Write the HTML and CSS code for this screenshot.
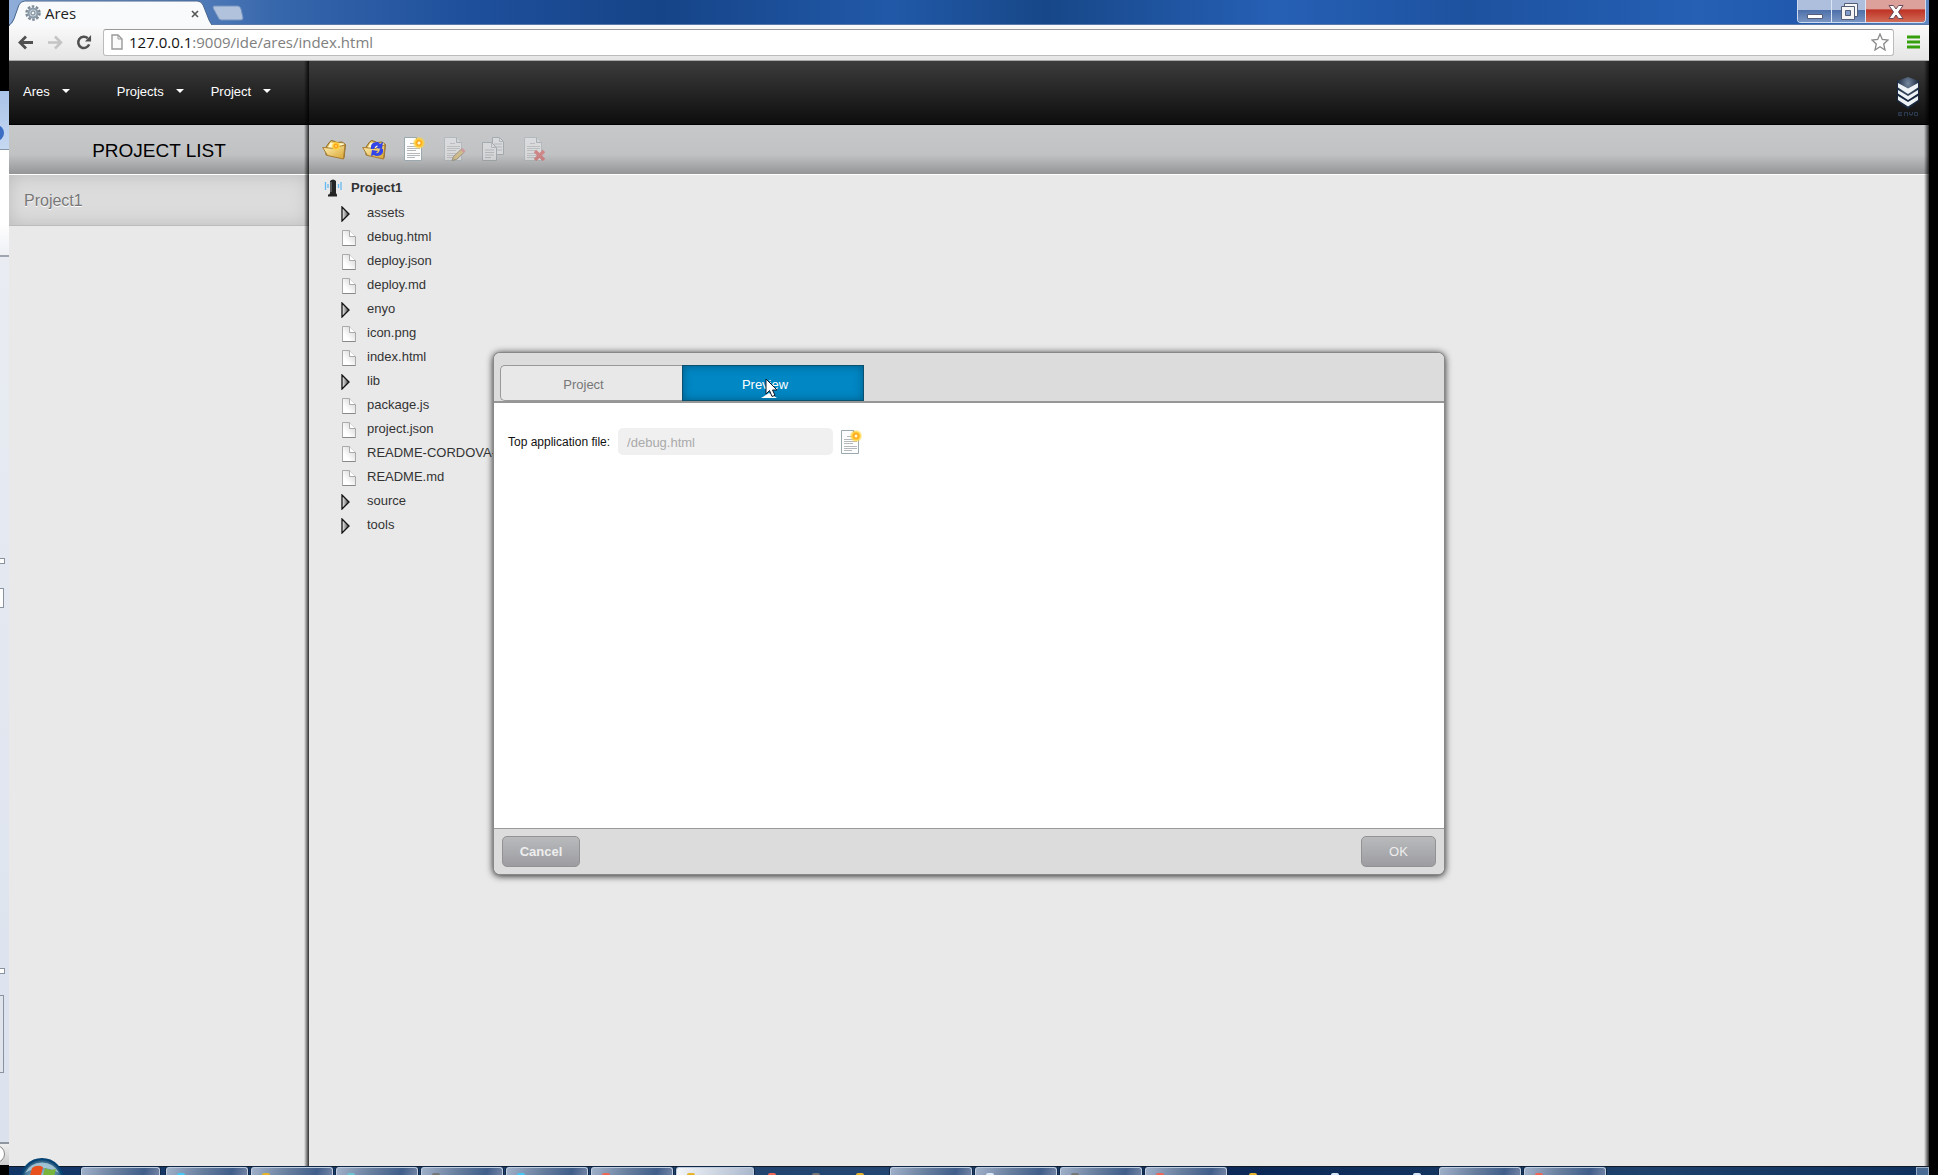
FILE: index.html
```html
<!DOCTYPE html>
<html lang="en">
<head>
<meta charset="utf-8">
<title>Ares</title>
<link rel="stylesheet" href="styles.css">
</head>
<body>
<svg class="defs" width="0" height="0" aria-hidden="true">
  <defs>
    <linearGradient id="gold" x1="0" y1="0" x2="1" y2="1"><stop offset="0" stop-color="#fff3ba"/><stop offset="1" stop-color="#d9a42e"/></linearGradient>
    <linearGradient id="paper" x1="1" y1="0" x2="0" y2="1"><stop offset="0" stop-color="#cfcfcf"/><stop offset=".7" stop-color="#fff"/></linearGradient>
    <linearGradient id="arrow" x1="0" y1="0" x2="1" y2="0"><stop offset="0" stop-color="#f4f4f4"/><stop offset="1" stop-color="#444"/></linearGradient>
    <radialGradient id="sun"><stop offset="0" stop-color="#fff6b0"/><stop offset=".3" stop-color="#ff9c10"/><stop offset=".6" stop-color="#ffd03c"/><stop offset="1" stop-color="#ffd84000"/></radialGradient>
    <radialGradient id="orb"><stop offset="0" stop-color="#b8d8e8"/><stop offset=".8" stop-color="#4a7d9c"/><stop offset="1" stop-color="#0d4068"/></radialGradient>
    <symbol id="folder" viewBox="0 0 24 24">
      <path d="M4 10 8 4.500 9.500 3.500 13 4.500 15 5.500 20 5 23.500 7.500 22 21 4 18z" fill="#dcb555" stroke="#8d6a28"/>
      <path d="M6 10 8.500 5.500 14 6 22 6.500 20.500 12 7 13z" fill="#fff8d0"/>
      <path d="M.7 10.500 14 11.500 17 9.500 23 8 21.500 22 5.500 18.500z" fill="url(#gold)" stroke="#a87c34"/>
    </symbol>
    <symbol id="doc" viewBox="0 0 24 24">
      <path d="M2.500.5h12l5 5v18h-17z" fill="#fdfdfd" stroke="#9aa8b0"/>
      <path d="M14.500.5v5h5" fill="#e5edf2" stroke="#87949c"/>
      <path d="M8 6.500h5M5 9.500h13M5 11.500h13M5 13.500h9M5 16.500h13M5 18.500h13M5 20.500h8" stroke="#b4b8bb" fill="none"/>
    </symbol>
    <symbol id="newdoc" viewBox="0 0 24 24"><use href="#doc"/><circle cx="17" cy="6" r="6.500" fill="url(#sun)"/><circle cx="17" cy="6" r="1.500" fill="#fff8cc"/></symbol>
    <symbol id="file" viewBox="0 0 14 16"><path d="M.5.500h7l6 6v9H.5z" fill="url(#paper)" stroke="#aaa"/><path d="M7.500.5v6h6" fill="#fff" stroke="#aaa"/><path d="M.5 15.500h13" stroke="#888"/></symbol>
    <symbol id="expand" viewBox="0 0 10 16"><path d="M1 1 8 8 1 15z" fill="url(#arrow)" stroke="#111" stroke-width="1.300"/></symbol>
  </defs>
</svg>
<div class="desktop">
  <aside class="behind">
    <div class="behind-glass"><i></i></div><div class="behind-white"></div>
    <div class="behind-page"><i></i><i></i><i></i><i></i></div><div class="behind-end"><i></i></div>
  </aside>
  <div class="window">
    <header class="titlebar">
      <div class="tab">
        <svg class="tab-shape" viewBox="0 0 205 26" preserveAspectRatio="none"><path d="M0 25Q3 24 5 19L10 5Q12 1 16 1H190Q194 1 196 5L202 20Q204 24 205 25V26H0z" fill="#f9fafb" stroke="#46648c"/><path d="M1 25.500H205" stroke="#f9fafb"/></svg>
        <svg class="gear" viewBox="0 0 16 16"><circle cx="8" cy="8" r="6.500" fill="none" stroke="#7d8b98" stroke-width="2.500" stroke-dasharray="2.600 1.480"/><circle cx="8" cy="8" r="4.500" fill="#c5d2dc" stroke="#8c9ba8" stroke-width="2"/><circle cx="8" cy="8" r="2" fill="#f4f7f9" stroke="#71818f"/></svg>
        <span>Ares</span>
        <button class="tab-close" aria-label="Close tab"><svg viewBox="0 0 8 8"><path d="m1 1 6 6M7 1 1 7" stroke="#555" stroke-width="1.600"/></svg></button>
      </div>
      <button class="newtab" aria-label="New tab"><svg viewBox="0 0 32 16"><path d="M2 1h24q2 0 3 3l2 9q0 2-2 2H9q-2 0-3-3L1 3q0-2 1-2" fill="#b1c2dc" stroke="#7593bf"/></svg></button>
      <div class="wincontrols">
        <button aria-label="Minimize"><svg viewBox="0 0 20 18"><path d="M2.500 11.500h15v4h-15z" fill="#fff" stroke="#535e78"/></svg></button>
        <button aria-label="Restore"><svg viewBox="0 0 20 18"><path d="M5.500.5h13v13h-13z" fill="#f7f7f7" stroke="#535e78"/><path d="M2.500 3.500h13v13h-13z" fill="#f4f4f4" stroke="#535e78"/><path d="M6.500 7.500h5v5h-5z" fill="#7f9bc9" stroke="#535e78"/></svg></button>
        <button class="close" aria-label="Close"><svg viewBox="0 0 20 18"><path d="M3 2.500h4.500L10 6l2.500-3.500H17L12.500 9l4.500 6.500h-4.500L10 12l-2.500 3.500H3L7.500 9z" fill="#fff" stroke="#6a4a58"/></svg></button>
      </div>
    </header>
    <div class="navbar">
      <button aria-label="Back"><svg viewBox="0 0 16 14"><path d="M8 1 2 7l6 6M2 7h13" fill="none" stroke="#505050" stroke-width="2.800"/></svg></button>
      <button aria-label="Forward"><svg viewBox="0 0 16 14"><path d="m8 1 6 6-6 6M14 7H1" fill="none" stroke="#c4c4c4" stroke-width="2.500"/></svg></button>
      <button aria-label="Reload"><svg viewBox="0 0 16 16"><path d="M13.500 10A6 6 0 1 1 12 3.500" fill="none" stroke="#505050" stroke-width="2.700"/><path d="M15.500 0v7H9z" fill="#505050"/></svg></button>
      <div class="address">
        <svg class="page" viewBox="0 0 12 16"><path d="M1 1h6l4 4v10H1z" fill="#fafafa" stroke="#999" stroke-width="1.400"/><path d="M7 1v4h4" fill="none" stroke="#999"/></svg>
        <span><b>127.0.0.1</b>:9009/ide/ares/index.html</span>
        <button aria-label="Bookmark"><svg viewBox="0 0 18 18"><path d="m9 1 2.300 5.500 5.700.5-4.300 4 1.300 6L9 13.700 4 17l1.300-6L1 7l5.700-.5z" fill="#fff" stroke="#8a8a8a" stroke-width="1.300"/></svg></button>
      </div>
      <button class="menu" aria-label="Menu"><svg viewBox="0 0 13 14"><path d="M0 2h13M0 7h13M0 12h13" stroke="#36a00c" stroke-width="3"/></svg></button>
    </div>
    <main class="app">
      <section class="sidebar">
        <nav class="topbar"><button>Ares</button><button>Projects</button><button>Project</button></nav>
        <h1>PROJECT LIST</h1>
        <a class="project" href="#project1">Project1</a>
      </section>
      <section class="workspace">
        <div class="topbar brand">
          <svg viewBox="0 0 24 40"><defs><radialGradient id="shield" cx=".5" cy=".2"><stop offset="0" stop-color="#75879f"/><stop offset="1" stop-color="#17273d"/></radialGradient></defs><path d="M1 4 12 0l11 4v20L12 32 1 24z" fill="url(#shield)"/><path d="m2 6 10 5.500L22 6v4.500L12 17 2 10.500zm0 7 10 6 10-6v3.500L12 23 2 16.500zm0 6 10 6 10-6v4l-10 6.500L2 23z" fill="#edf2f6"/><path d="M6 35.500H2.500v3H6M2.500 37H6M8.500 39v-3.500h3V39M13.500 35v2.500h3V35M15 37.500V39M18.500 35.500h3v3h-3z" fill="none" stroke="#2c3a50"/></svg>
        </div>
        <div class="tools">
          <button aria-label="New folder"><svg viewBox="0 0 24 24"><use href="#folder"/><circle cx="14" cy="9" r="5" fill="url(#sun)"/></svg></button>
          <button aria-label="Refresh folder"><svg viewBox="0 0 24 24"><use href="#folder"/><path d="M9 12q-1-7 6-7 2 0 3 2l3-2-1 7-6-1 2-2q-2-2-4 3zm12 0q1 7-6 7-2 0-3-1l-3 1 1-6 6 1-2 2q3 1 4-4z" fill="#3344e8"/></svg></button>
          <button aria-label="New file"><svg viewBox="0 0 24 24"><use href="#newdoc"/></svg></button>
          <button aria-label="Edit file" disabled><svg viewBox="0 0 24 24"><use href="#doc"/><path d="m10 23.500 1.500-4 8-7.500 3 3-8 7.500z" fill="#e8b43c" stroke="#6a5724"/><path d="m18.500 13 2-2 3 3-2 2z" fill="#e66060"/></svg></button>
          <button aria-label="Copy file" disabled><svg viewBox="0 0 24 24"><path d="M10.500.5h7l4 4v13h-11z" fill="#f6f8f9" stroke="#788389"/><path d="M.5 5.500h9l5 5v13H.5z" fill="#f6f8f9" stroke="#788389"/><path d="M17.500.5v4h4M9.500 5.500v5h5M12 7h8M12 10h8M15 13h5M3 13h9M3 15.500h9M3 18h9M3 20.500h6" fill="none" stroke="#9ba2a6"/></svg></button>
          <button aria-label="Delete file" disabled><svg viewBox="0 0 24 24"><use href="#doc"/><path d="m13 14 9 9M22 14l-9 9" stroke="#e22d2d" stroke-width="3.500"/></svg></button>
        </div>
        <ul class="tree">
          <li class="root"><svg viewBox="0 0 18 18"><path d="M6 2q3-3 6 0v12l1 2H5l1-2z" fill="#252525"/><path d="M7 3v10" stroke="#888"/><path d="M4 16.500h9" stroke="#222" stroke-width="2"/><path d="M1.500 3v8M4 5v4M14.500 5v4M17 3v8" stroke="#65b9ee" stroke-width="1.300"/></svg>Project1</li>
          <li class="dir"><svg><use href="#expand"/></svg>assets</li>
          <li><svg><use href="#file"/></svg>debug.html</li>
          <li><svg><use href="#file"/></svg>deploy.json</li>
          <li><svg><use href="#file"/></svg>deploy.md</li>
          <li class="dir"><svg><use href="#expand"/></svg>enyo</li>
          <li><svg><use href="#file"/></svg>icon.png</li>
          <li><svg><use href="#file"/></svg>index.html</li>
          <li class="dir"><svg><use href="#expand"/></svg>lib</li>
          <li><svg><use href="#file"/></svg>package.js</li>
          <li><svg><use href="#file"/></svg>project.json</li>
          <li><svg><use href="#file"/></svg>README-CORDOVA-</li>
          <li><svg><use href="#file"/></svg>README.md</li>
          <li class="dir"><svg><use href="#expand"/></svg>source</li>
          <li class="dir"><svg><use href="#expand"/></svg>tools</li>
        </ul>
      </section>
    </main>
  </div>
  <div class="edge"></div>
</div>
<footer class="taskbar">
  <button class="start" aria-label="Start"><svg viewBox="0 0 44 44"><circle cx="22" cy="22" r="21" fill="url(#orb)" stroke="#064475" stroke-width="2"/><path d="M5 15A19 19 0 0 1 39 15Q22 5 5 15" fill="#c1dce7" opacity=".7"/><path d="M12 10q5-4 11-1l-3 12q-6-3-11 0z" fill="#e8501e"/><path d="M25 10q5 3 11 1l-3 11q-6 2-11-1z" fill="#78b43c"/></svg></button>
  <div class="tasks">
    <button aria-label="Task 1"></button><button aria-label="Task 2"><i class="cyan"></i></button><button aria-label="Task 3"><i class="gold"></i></button><button aria-label="Task 4"><i class="teal"></i></button><button aria-label="Task 5"><i class="gray"></i></button><button aria-label="Task 6"><i class="cyan"></i></button><button aria-label="Task 7"><i class="red"></i></button><button class="active" aria-label="Task 8"><i class="gold"></i></button><button class="plain" aria-label="Task 9"><i class="red"></i><i class="gray"></i><i class="gold"></i></button><button aria-label="Task 10"></button><button aria-label="Task 11"><i class="white"></i></button><button aria-label="Task 12"><i class="gray"></i></button><button aria-label="Task 13"><i class="red"></i></button><button class="plain long" aria-label="Task 14"><i class="gold"></i><i class="white"></i><i class="white"></i></button><button aria-label="Task 15"></button><button aria-label="Task 16"><i class="red"></i></button>
  </div>
  <button class="peek" aria-label="Show desktop"></button>
</footer>
<div class="overlay">
  <form class="dialog" role="dialog" aria-label="Project settings">
    <div class="dialog-tabs"><button type="button">Project</button><button type="button" class="selected">Preview<svg class="cursor" viewBox="0 0 13 20"><path d="M1 1v15l3.500-3.500L7 18.500l3-1.200L7.500 12H12z" fill="#fff" stroke="#101828"/></svg></button></div>
    <div class="dialog-body"><label for="top">Top application file:</label><input id="top" type="text" value="/debug.html" disabled><button type="button" class="pick" aria-label="Choose file"><svg viewBox="0 0 24 24"><use href="#newdoc"/></svg></button></div>
    <div class="dialog-foot"><button type="button">Cancel</button><button type="button" class="ok">OK</button></div>
  </form>
</div>
</body>
</html>
```
FILE: styles.css
```css
* { box-sizing: border-box; }
body {
  margin: 0;
  height: 100vh;
  display: flex;
  flex-direction: column;
  overflow: hidden;
  position: relative;
  background: #000;
  font-family: "Liberation Sans", Arial, sans-serif;
  font-size: 13px;
  color: #333;
}
button { margin: 0; padding: 0; border: 0; background: none; font: inherit; color: inherit; }
svg { display: block; flex: none; }
.defs { position: absolute; }
.desktop { flex: 1; min-height: 0; display: flex; }

/* Strip of the window that lies behind the browser */
.behind { width: 9px; padding-top: 91px; display: flex; flex-direction: column; background: #000; overflow: hidden; }
.behind-glass { height: 59px; padding-top: 34px; background: linear-gradient(#a9c2e8, #c6d9f2); border-bottom: 1px solid #8796ad; }
.behind-glass i { display: block; width: 16px; height: 16px; margin-left: -12px; border-radius: 50%; background: #3b6dc4; }
.behind-white { height: 107px; background: linear-gradient(#fff 70%, #eef0f4); border-bottom: 2px solid #a0a6b0; }
.behind-page { flex: 1; background: linear-gradient(#e9ecf2, #dbe2ee); padding-top: 301px; }
.behind-page i { display: block; width: 5px; height: 6px; border: 1px solid #8a929e; border-left: 0; background: #fff; }
.behind-page i:nth-child(2) { height: 20px; width: 4px; margin-top: 24px; }
.behind-page i:nth-child(3) { margin-top: 360px; }
.behind-page i:nth-child(4) { height: 78px; width: 4px; margin-top: 21px; background: #dfe4ed; }
.behind-end { height: 24px; padding-top: 1px; background: linear-gradient(#eee, #ccc); border-top: 2px solid #8f96a0; border-bottom: 1px solid #000; }
.behind-end i { display: block; width: 18px; height: 18px; margin-left: -13px; border: 1px solid #888; border-radius: 50%; background: #fff; }

.window { flex: 1; min-width: 0; display: flex; flex-direction: column; }
.edge { width: 9px; background: #000; }

.titlebar { height: 25px; display: flex; align-items: flex-start; background: linear-gradient(90deg, #8fadd8, #3666ab 14%, #1e4f9b 24%, #164488 34%, #2159a8 46%, #174788 54%, #2660b5 66%, #1d529f 76%, #2560b5 88%, #2059ad 93%, #6087c0); border-bottom: 1px solid #5b7aa9; }
.tab { position: relative; width: 203px; height: 25px; padding: 2px 13px 0 16px; display: flex; gap: 4px; color: #222; font: 15px/22px "Open Sans", sans-serif; }
.tab > * { position: relative; }
.tab .tab-shape { position: absolute; inset: 0; width: 203px; height: 26px; }
.gear { width: 16px; height: 16px; margin-top: 3px; }
.tab-close { margin-left: auto; align-self: flex-start; padding-top: 8px; }
.tab-close svg { width: 8px; height: 8px; }
.newtab { margin-top: 5px; }
.newtab svg { width: 32px; height: 16px; }
.wincontrols { margin-left: auto; margin-right: 3px; height: 23px; display: flex; border: 1px solid #cedbf0; border-top: 0; border-radius: 0 0 4px 4px; overflow: hidden; }
.wincontrols button { width: 34px; padding: 1px 0 0 7px; background: linear-gradient(#aebfdd 45%, #4d70aa 46%, #7995c3); border-right: 1px solid #dae5f5; }
.wincontrols svg { width: 20px; height: 18px; }
.wincontrols .close { width: 59px; padding-left: 20px; border: 0; background: linear-gradient(#dda19b 40%, #bf3224 45%, #d16c57); }

.navbar { height: 36px; display: flex; align-items: center; padding: 0 9px 1px 9px; background: linear-gradient(#fafafa, #e5e5e5); border-bottom: 1px solid #aaa; }
.navbar > button { margin-right: 13px; }
.navbar > button svg { width: 16px; height: 15px; }
.navbar > button:nth-child(3) { margin-right: 11px; }
.navbar > .menu { margin: 0 0 0 13px; }
.navbar > .menu svg { width: 13px; height: 14px; }
.address { flex: 1; height: 27px; display: flex; align-items: center; gap: 6px; padding: 0 4px 0 7px; background: #fff; border: 1px solid #bbb; border-top-color: #999; border-radius: 3px; color: #808080; font: 15px/24px "Open Sans", sans-serif; }
.address b { color: #111; font-weight: 400; }
.address .page { width: 12px; height: 16px; }
.address button { margin-left: auto; }
.address button svg { width: 18px; height: 18px; }

.app { flex: 1; min-height: 0; display: flex; background: #e9e9e9; }
.sidebar { width: 300px; display: flex; flex-direction: column; position: relative; }
.workspace { flex: 1; min-width: 0; position: relative; }
.sidebar::after, .workspace::after { content: ""; position: absolute; top: 0; right: 0; bottom: 0; width: 5px; background: linear-gradient(90deg, #0000, #000c); pointer-events: none; }
.topbar { height: 64px; display: flex; padding-left: 14px; background: linear-gradient(#3c3c3c, #0d0d0d); border-bottom: 1px solid #000; color: #fff; }
.topbar button { height: 60px; display: flex; align-items: center; gap: 12px; margin-right: 27px; }
.topbar button:first-child { margin-right: 47px; }
.topbar button::after { content: ""; border: 4px solid transparent; border-top-color: #fff; border-bottom: 0; }
.brand { justify-content: flex-end; padding: 16px 9px 0 0; }
.brand svg { width: 24px; height: 40px; }
.sidebar h1, .tools { height: 50px; margin: 0; background: linear-gradient(#c7c8ca, #c1c2c4 60%, #949597); border-bottom: 1px solid #fff; }
.sidebar h1 { font-size: 19px; line-height: 51px; font-weight: 400; text-align: center; color: #000; }
.project { height: 51px; padding-left: 15px; line-height: 52px; font-size: 16px; color: #777; text-decoration: none; text-shadow: 0 1px #fff; background: #dcdcdc; border-bottom: 1px solid #bbb; box-shadow: inset 0 0 18px #bbb; }
.tools { display: flex; gap: 16px; padding: 12px 0 0 13px; }
.tools button { width: 24px; height: 24px; }
.tools svg { width: 24px; height: 24px; }
.tools button:disabled { opacity: .4; }
.tree { list-style: none; margin: 0; padding: 0 0 0 32px; }
.tree li { height: 24px; display: flex; align-items: center; gap: 11px; }
.tree li svg { width: 14px; height: 16px; margin: 3px 0 0 1px; }
.tree .dir { gap: 16px; }
.tree .dir svg { width: 10px; margin-left: 0; }
.tree .root { height: 25px; margin-left: -17px; gap: 9px; font-weight: 700; }
.tree .root svg { width: 18px; height: 18px; margin: 0; }

.overlay { position: absolute; inset: 52px 0 0; display: flex; align-items: center; justify-content: center; pointer-events: none; }
.dialog { width: 950px; min-height: 521px; display: flex; flex-direction: column; pointer-events: auto; background: #fff; border-radius: 6px; box-shadow: 0 0 0 1px #888, 0 1px 7px 1px #222; overflow: hidden; }
.dialog-tabs { height: 50px; display: flex; padding: 12px 6px 0; background: #dcdcdc; border-bottom: 2px solid #969696; }
.dialog-tabs button { position: relative; width: 182px; height: 36px; padding: 3px 16px 0 0; border: 1px solid #999; border-right: 0; border-radius: 5px 0 0 5px; background: #e8e8e8; color: #777; }
.dialog-tabs .selected { border: 1px solid #0a506f; border-radius: 0; background: #0087c4; box-shadow: inset 0 0 8px #005b86; color: #fff; }
.selected::after { content: ""; position: absolute; left: 78px; bottom: 2px; border: 8px solid transparent; border-top: 0; border-bottom: 5px solid #fff; }
.cursor { position: absolute; left: 82px; top: 12px; width: 13px; height: 20px; z-index: 1; }
.dialog-body { flex: 1; display: flex; align-items: flex-start; padding: 25px 14px; font-size: 12px; color: #111; }
.dialog-body label { line-height: 28px; }
.dialog-body input { width: 215px; height: 27px; margin: 0 6px 0 8px; padding: 1px 9px 0; border: 0; border-radius: 5px; background: #f0f0f0; color: #aaa; font: 13px "Liberation Sans", Arial, sans-serif; }
.pick { margin-top: 2px; }
.pick svg { width: 24px; height: 24px; }
.dialog-foot { height: 46px; padding: 7px 8px; display: flex; justify-content: space-between; background: #dcdcdc; border-top: 1px solid #999; }
.dialog-foot button { width: 78px; height: 31px; border: 1px solid #929294; border-radius: 5px; background: linear-gradient(#b8babc, #9d9da1); color: #eee; font-weight: 700; }
.dialog-foot .ok { width: 75px; font-weight: 400; }

.taskbar { height: 9px; flex: none; position: relative; display: flex; margin: 0 9px; padding-left: 72px; background: linear-gradient(90deg, #123567, #244672 45%, #0b2857 65%, #1e426b 85%, #0f305d); border-top: 1px solid #101a28; }
.start { position: absolute; left: 11px; top: -9px; height: 18px; overflow: hidden; }
.start svg { width: 44px; height: 44px; }
.tasks { flex: 1; display: flex; gap: 3px; }
.tasks button { width: 82px; display: flex; align-items: flex-end; padding: 0 10px; gap: 36px; background: linear-gradient(110deg, #a0b0c9, #667d9d 45%, #405e8a 80%, #7284a5); border: 1px solid #c0cde0; border-bottom: 0; border-radius: 3px 3px 0 0; box-shadow: 0 0 0 1px #102847; }
.tasks .active { width: 78px; background: linear-gradient(110deg, #f4f6f9, #a9b7cc); }
.tasks .plain { width: 130px; background: none; border-color: transparent; box-shadow: none; }
.tasks .plain.long { width: 206px; gap: 74px; padding-left: 18px; }
.tasks button:first-child { width: 79px; margin-right: 3px; }
.tasks i { width: 8px; height: 2px; border-radius: 2px 2px 0 0; }
.cyan { background: #45c8f5; }
.gold { background: #e6b32b; }
.teal { background: #6fc4d4; }
.gray { background: #777; }
.red { background: #ed6655; }
.white { background: #d8e8f8; }
.peek { width: 13px; background: #496b94; border: 1px solid #98afc7; border-bottom: 0; }
```
